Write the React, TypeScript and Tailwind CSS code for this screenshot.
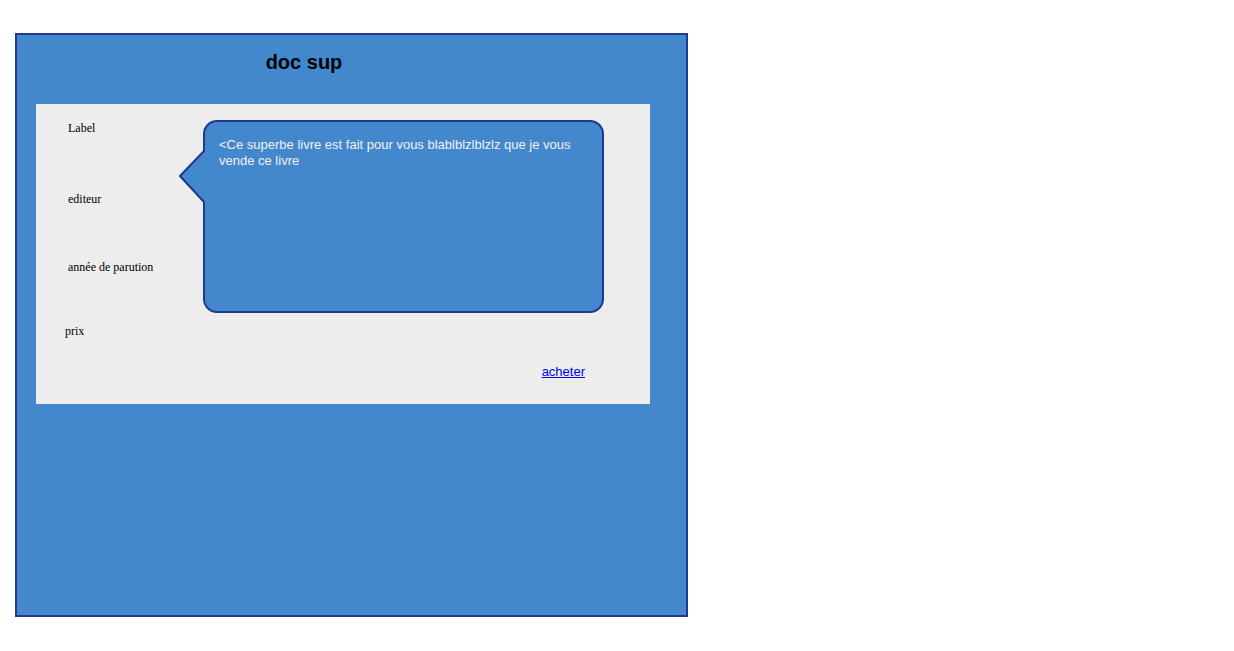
export default function App() {
  return (
    <div className="min-h-screen bg-white pl-[15px] pt-[33px]">
      <div className="w-[673px] h-[584px] border-2 border-[#1f3a8a] bg-[#4387cc]">
        {/* Title */}
        <h1 className="w-[574px] mt-[16px] text-center text-[20px] leading-[23px] font-bold text-black font-['Liberation_Sans',Arial,sans-serif]">
          doc sup
        </h1>

        {/* Book panel */}
        <div className="ml-[19px] mt-[30px] w-[614px] h-[300px] bg-[#ededed] pt-[16px] font-['Liberation_Serif','Times_New_Roman',serif] text-[12px] leading-[14px] text-black">
          <div className="flex">
            <div className="w-[167px] pl-[32px] pt-[1px] flex flex-col">
              <span>Label</span>
              <span className="mt-[57px]">editeur</span>
              <span className="mt-[54px]">année de parution</span>
            </div>

            {/* Speech bubble */}
            <div className="relative w-[401px] h-[193px] rounded-[14px] border-2 border-[#1f3a8a] bg-[#4387cc] pl-[14px] pr-[20px] pt-[15px] font-['Liberation_Sans',Arial,sans-serif] text-[13px] leading-[16px] text-[#f2f2f2]">
              <svg className="absolute left-[-26px] top-[28px]" width="32" height="54" viewBox="0 0 32 54">
                <polygon points="1,26 25,2 31,2 31,52 25,52" fill="#4387cc" />
                <polyline points="25,1 1,26 25,52" fill="none" stroke="#1f3a8a" strokeWidth="2" />
              </svg>
              <p className="relative">
                &lt;Ce superbe livre est fait pour vous blablblzlblzlz que je vous vende ce livre
              </p>
            </div>
          </div>

          <div className="pl-[29px] mt-[11px]">prix</div>

          <div className="flex justify-end pr-[65px] mt-[26px]">
            <a href="#" className="font-['Liberation_Sans',Arial,sans-serif] text-[13px] leading-[15px] text-[#0000ee] underline">
              acheter
            </a>
          </div>
        </div>
      </div>
    </div>
  )
}
